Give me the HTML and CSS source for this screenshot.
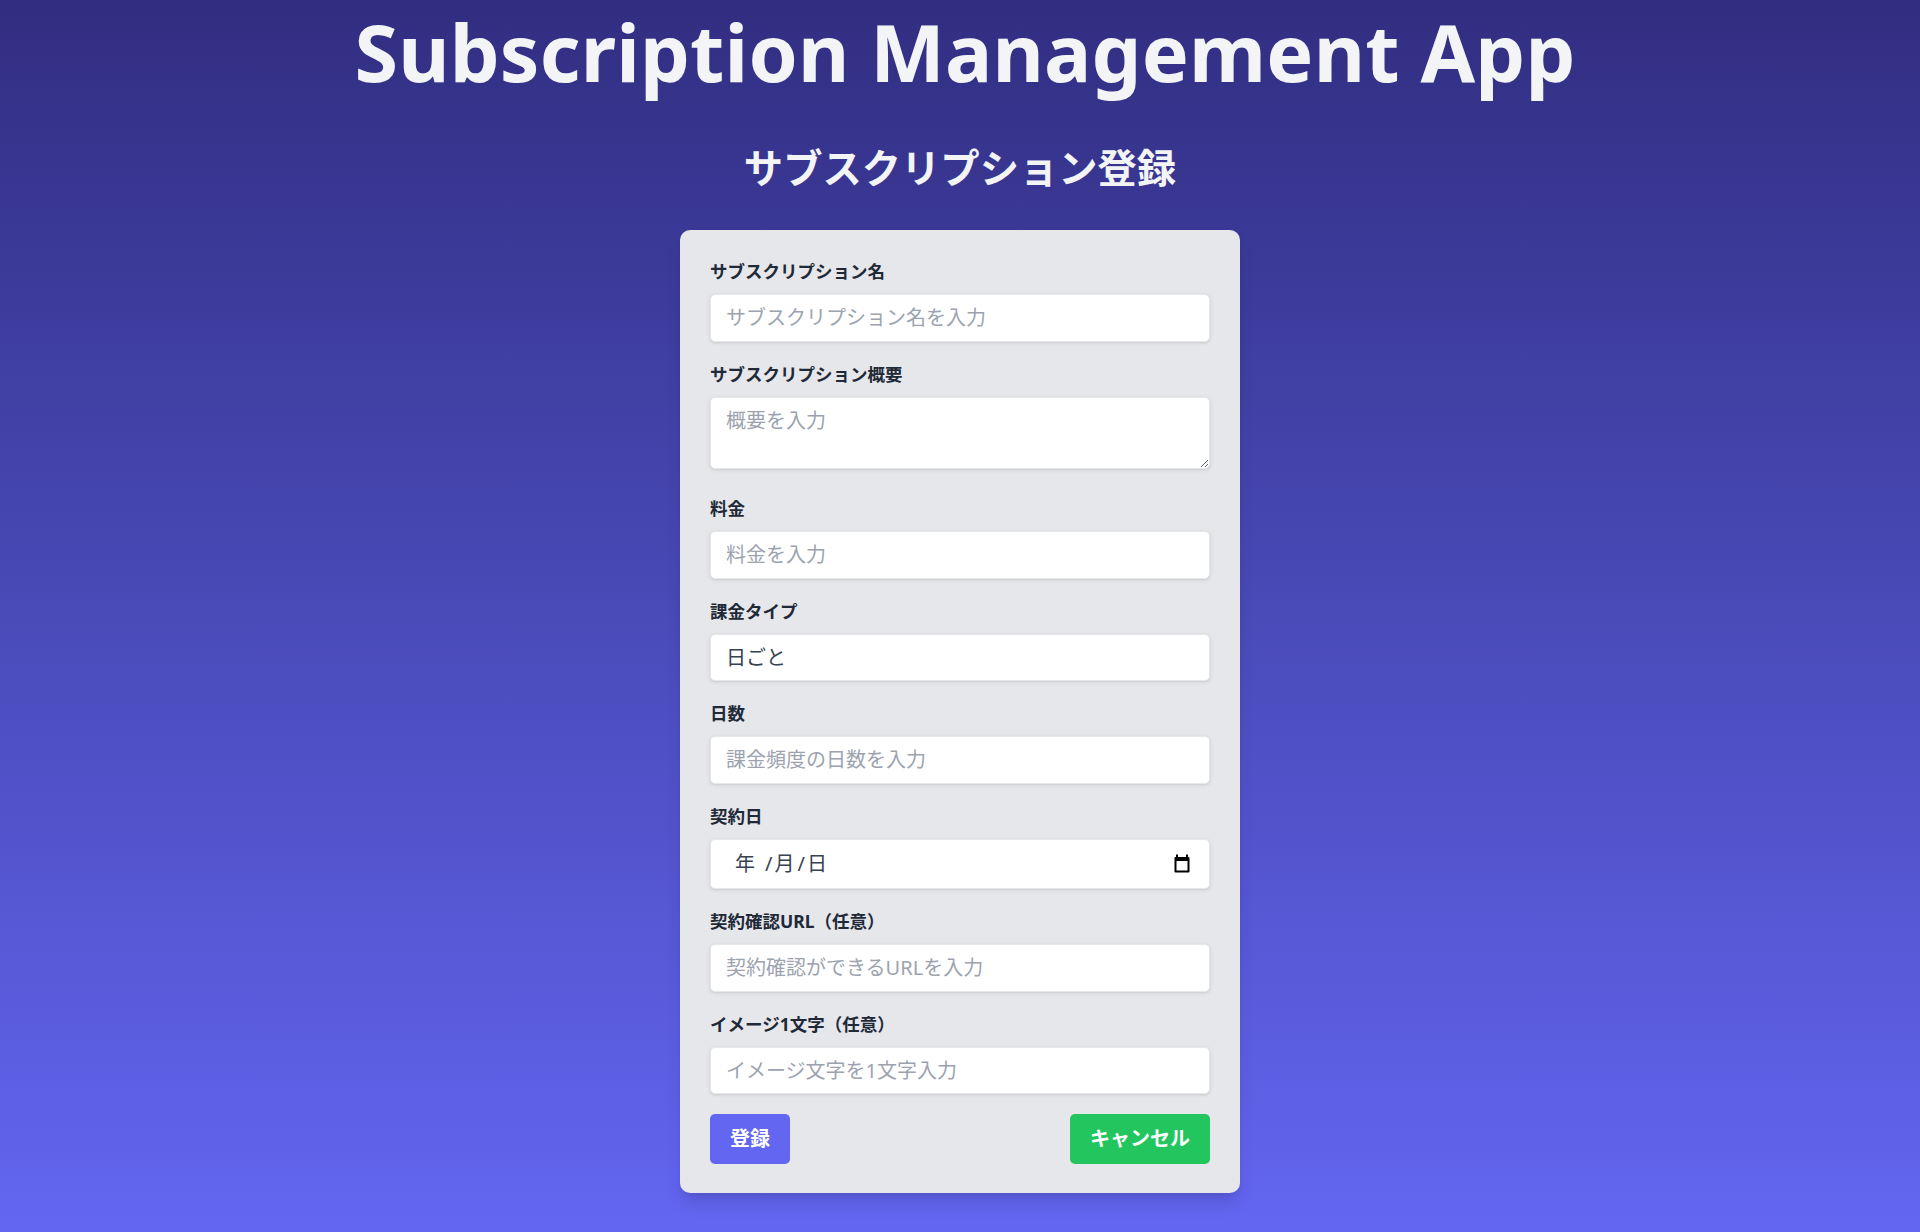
FILE: index.html
```html
<!DOCTYPE html>
<html lang="ja">
<head>
<meta charset="utf-8">
<title>Subscription Management App</title>
<link rel="stylesheet" href="styles.css">
</head>
<body>
<div class="page">
  <h1 class="title">Subscription Management App</h1>
  <h2 class="subtitle">サブスクリプション登録</h2>
  <form class="card">
    <div class="field">
      <label class="label" for="name">サブスクリプション名</label>
      <input class="input" id="name" type="text" placeholder="サブスクリプション名を入力">
    </div>
    <div class="field field-textarea">
      <label class="label" for="desc">サブスクリプション概要</label>
      <textarea class="input textarea" id="desc" rows="2" placeholder="概要を入力"></textarea>
    </div>
    <div class="field">
      <label class="label" for="price">料金</label>
      <input class="input" id="price" type="text" placeholder="料金を入力">
    </div>
    <div class="field">
      <label class="label" for="type">課金タイプ</label>
      <select class="input select" id="type">
        <option>日ごと</option>
        <option>月ごと</option>
        <option>年ごと</option>
      </select>
    </div>
    <div class="field">
      <label class="label" for="days">日数</label>
      <input class="input" id="days" type="text" placeholder="課金頻度の日数を入力">
    </div>
    <div class="field">
      <label class="label" for="date">契約日</label>
      <div class="input date" id="date">
        <span class="date-text"><span class="seg">年</span><span class="sep sep-first">/</span><span class="seg">月</span><span class="sep">/</span><span class="seg">日</span></span>
        <svg class="cal" width="16" height="19" viewBox="0 0 16 19" aria-hidden="true">
          <rect x="2" y="0.5" width="2" height="3" fill="#000"/>
          <rect x="12" y="0.5" width="2" height="3" fill="#000"/>
          <path d="M1.5 3h13a1 1 0 0 1 1 1v13.5a1 1 0 0 1-1 1h-13a1 1 0 0 1-1-1V4a1 1 0 0 1 1-1z M2.5 7v9.5h11V7z" fill="#000" fill-rule="evenodd"/>
        </svg>
      </div>
    </div>
    <div class="field">
      <label class="label" for="url">契約確認URL（任意）</label>
      <input class="input" id="url" type="text" placeholder="契約確認ができるURLを入力">
    </div>
    <div class="field">
      <label class="label" for="img">イメージ1文字（任意）</label>
      <input class="input" id="img" type="text" placeholder="イメージ文字を1文字入力">
    </div>
    <div class="actions">
      <button type="submit" class="btn btn-primary">登録</button>
      <button type="button" class="btn btn-cancel">キャンセル</button>
    </div>
  </form>
</div>
</body>
</html>
```

FILE: styles.css
```css
* {
  box-sizing: border-box;
}

html, body {
  margin: 0;
  padding: 0;
}

body {
  min-height: 1232px;
  background: linear-gradient(to bottom, #312e81 0%, #6366f1 100%);
  font-family: "Noto Sans", "Noto Sans CJK JP", sans-serif;
  color: #1f2937;
}

.page {
  display: flex;
  flex-direction: column;
  align-items: center;
  padding-top: 7px;
}

.title {
  margin: 0;
  padding-left: 10px;
  font-size: 79px;
  line-height: 90px;
  font-weight: 700;
  color: #f3f4f6;
  letter-spacing: 0.2px;
}

.subtitle {
  margin: 44px 0 0;
  font-family: "Noto Sans CJK JP", sans-serif;
  font-size: 39.3px;
  line-height: 50px;
  font-weight: 700;
  color: #f3f4f6;
}

.card {
  margin-top: 39px;
  width: 560px;
  padding: 29px 30px 29px;
  background: #e5e7eb;
  border-radius: 10px;
  box-shadow: 0 12px 19px -4px rgba(0, 0, 0, 0.12), 0 5px 8px -5px rgba(0, 0, 0, 0.12);
}

.field {
  margin-bottom: 20px;
}

.field-textarea {
  margin-bottom: 27px;
}

.label {
  display: block;
  margin-bottom: 10px;
  font-family: "Noto Sans", "Noto Sans CJK JP", sans-serif;
  font-size: 17.5px;
  line-height: 25px;
  font-weight: 700;
  color: #1f2937;
}

.input {
  display: block;
  width: 100%;
  height: 47.5px;
  margin: 0;
  padding: 10px 15px;
  border: 1px solid #e5e7eb;
  border-radius: 5px;
  background: #fff;
  box-shadow: 0 1px 4px rgba(0, 0, 0, 0.1), 0 1px 2px -1px rgba(0, 0, 0, 0.1);
  font-family: "Noto Sans", "Noto Sans CJK JP", sans-serif;
  font-size: 20px;
  line-height: 25px;
  color: #374151;
  outline: none;
}

.input::placeholder {
  color: #9ca3af;
  opacity: 1;
}

.textarea {
  height: 72.5px;
  resize: vertical;
}

.select {
  appearance: none;
  -webkit-appearance: none;
  padding-top: 0;
  padding-bottom: 0;
}

.date {
  display: flex;
  align-items: center;
  justify-content: space-between;
  height: 50.5px;
  padding: 0 19px 0 24px;
}

.date-text {
  display: flex;
  align-items: center;
  color: #374151;
  font-size: 20px;
  line-height: 25px;
}

.sep {
  margin: 0 2px 0 3px;
}

.sep-first {
  margin-left: 10px;
}

.cal {
  display: block;
  flex: none;
}

.actions {
  display: flex;
  justify-content: space-between;
  align-items: center;
}

.btn {
  height: 49.5px;
  padding: 0 20px;
  border: none;
  border-radius: 5px;
  font-family: "Noto Sans", "Noto Sans CJK JP", sans-serif;
  font-size: 20px;
  line-height: 30px;
  font-weight: 700;
  color: #fff;
  cursor: pointer;
}

.btn-primary {
  background: #6366f1;
}

.btn-cancel {
  background: #22c55e;
}
```
